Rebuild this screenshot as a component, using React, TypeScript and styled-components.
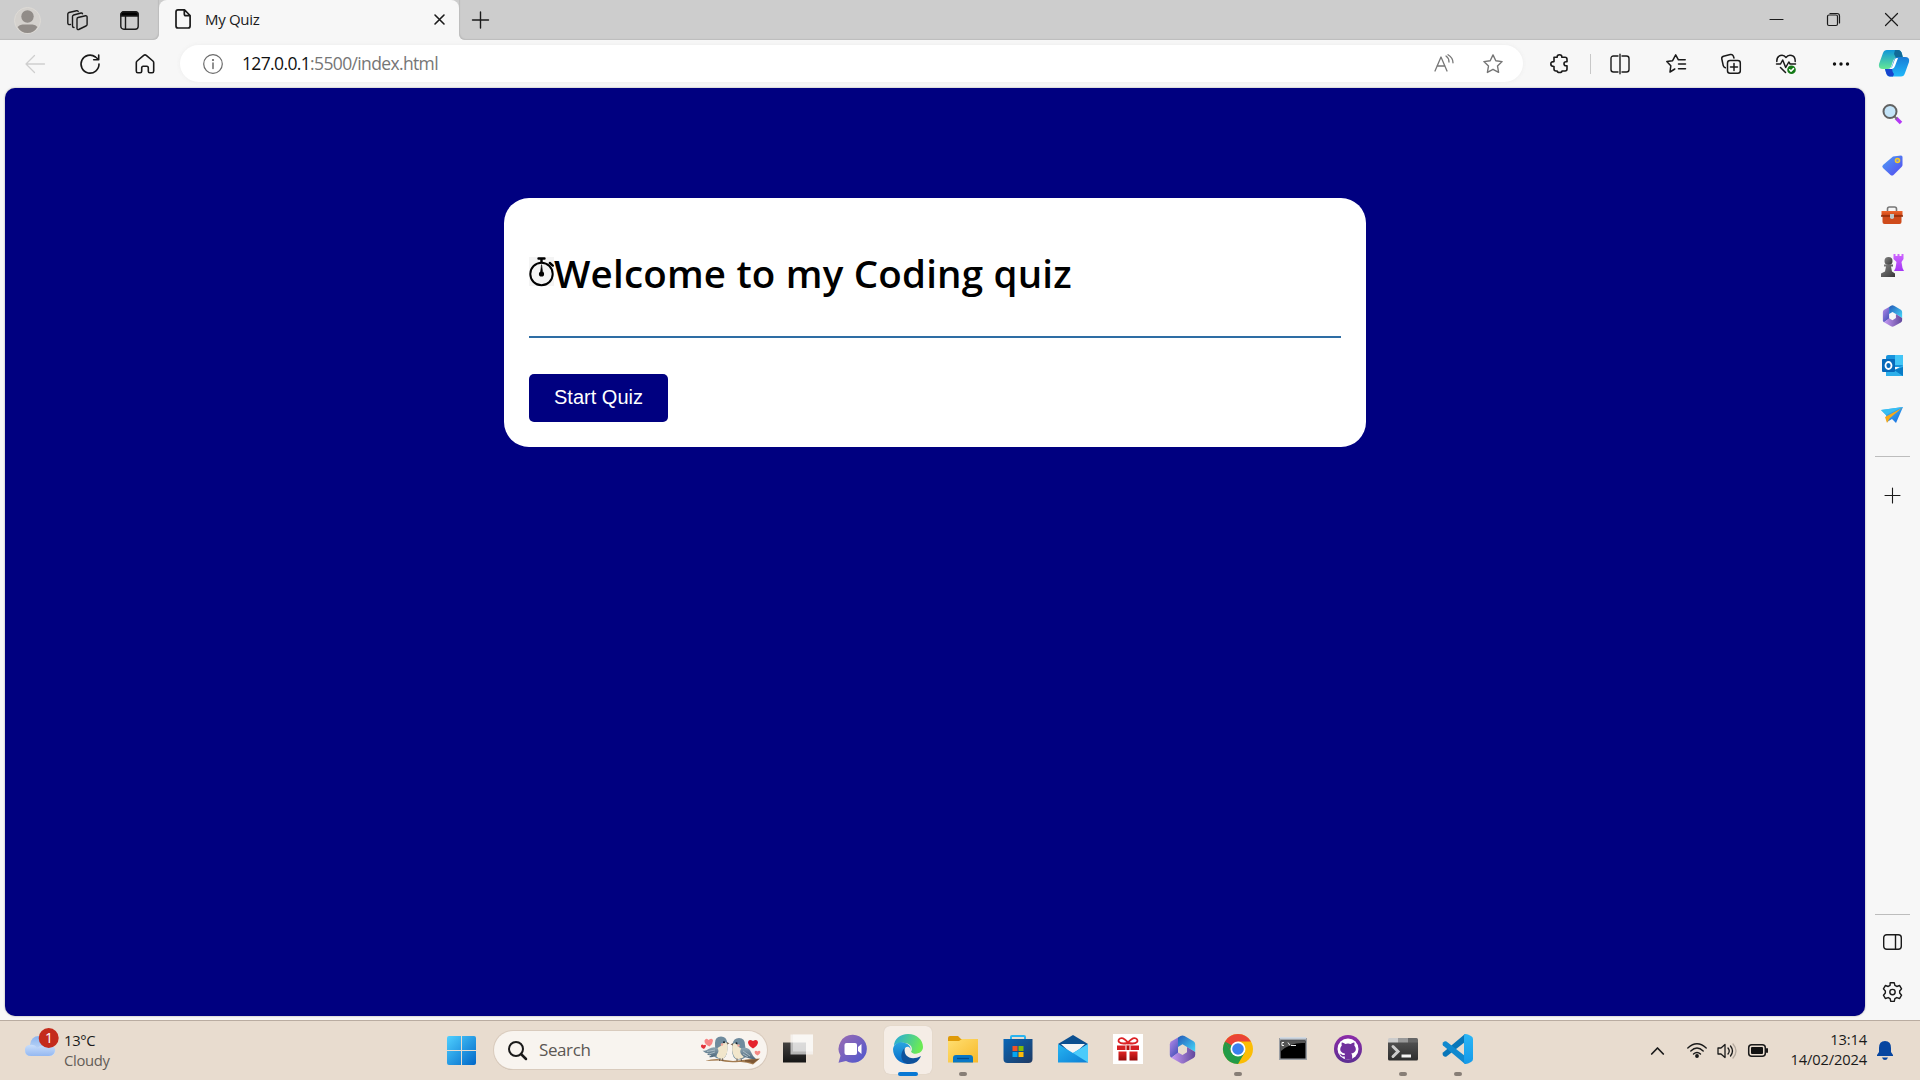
import React from "react";
import styled, { createGlobalStyle } from "styled-components";

const Global = createGlobalStyle`
  *{box-sizing:border-box}
  html,body{margin:0;padding:0;overflow:hidden}
  body{font-family:"Open Sans","Noto Sans",sans-serif;color:#1a1a1a;background:#f7f7f7}
  svg{display:block;flex:none;overflow:visible}
`;

const Screen = styled.div`width:1920px;height:1080px;display:flex;flex-direction:column;background:#f7f7f7;`;
const TabStrip = styled.header`height:40px;flex:none;display:flex;background:#f7f7f7;`;
const Slot = styled.div<{ $w: number }>`width:${p => p.$w}px;height:100%;flex:none;display:flex;align-items:center;justify-content:center;`;
const StripLead = styled.div`width:159px;display:flex;border-bottom-right-radius:6px;box-shadow:inset -1px -1px 1px #bdbdbd;background:#cdcdcd;`;
const TabHolder = styled.div`width:300px;background:#f7f7f7;border-radius:8px 8px 0 0;display:flex;align-items:center;padding:0 14px 0 16px;box-shadow:0 -8px 0 #cdcdcd;clip-path:inset(0);`;
const TabBack = styled.div`background:linear-gradient(#cdcdcd 12px,#f7f7f7 12px);`;
const TabTitle = styled.span`margin:-2px 0 0 14px;flex:1;font-size:15px;letter-spacing:-.3px;color:#1b1b1b;line-height:20px;`;
const StripRest = styled.div`flex:1;display:flex;background:#cdcdcd;border-bottom-left-radius:6px;box-shadow:inset 1px -1px 1px #bdbdbd;`;
const WindowButtons = styled.div`margin-left:auto;display:flex;height:39px;`;

const Toolbar = styled.nav`height:48px;flex:none;display:flex;align-items:center;background:#f7f7f7;padding:0 0 1px 7px;`;
const Address = styled.div`width:1343px;height:37px;margin-left:8px;border-radius:19px;background:#fff;display:flex;align-items:center;padding-left:23px;box-shadow:0 0 4px #ececec;`;
const Url = styled.span`margin:-1px 0 0 19px;flex:1;font-size:17.5px;letter-spacing:-.64px;color:#111;line-height:24px;span{color:#767676}`;
const Divider = styled.i`width:1px;height:20px;background:#c8c8c8;`;

const Middle = styled.div`flex:1;display:flex;min-height:0;padding:0 0 4px 5px;`;
const Viewport = styled.main`width:1860px;background:#000080;border-radius:10px;box-shadow:0 0 2px #999;padding-top:110px;`;
const Card = styled.section`width:862px;height:249px;margin:0 auto;padding:59px 25px 25px;border-radius:25px;background:#fff;`;
const TitleRow = styled.div`height:38px;display:flex;align-items:flex-start;`;
const Title = styled.h1`margin:-10px 0 0;font:600 38.5px/52px "Open Sans","Noto Sans",sans-serif;letter-spacing:.2px;color:#000;white-space:nowrap;`;
const Rule = styled.hr`height:2px;margin:41px 0 36px;border:0;background:#2e6da4;`;
const StartButton = styled.button`width:139px;height:48px;border:0;border-radius:5px;background:#000080;color:#fff;font:20px "Liberation Sans",Arial,sans-serif;padding:0 0 2px;`;

const Sidebar = styled.aside`width:54px;display:flex;flex-direction:column;align-items:center;`;
const SideCell = styled.div<{ $h: number }>`height:${p => p.$h}px;flex:none;display:flex;align-items:center;`;
const SideLine = styled.i<{ $top?: boolean }>`width:35px;height:1px;flex:none;background:#bdbdbd;margin-top:${p => (p.$top ? "auto" : "16px")};`;

const Taskbar = styled.footer`height:60px;flex:none;display:flex;border-top:1px solid #b9aca1;background:#e8dccf;`;
const Weather = styled.div`width:433px;display:flex;padding:13px 0 0 25px;`;
const WeatherText = styled.div`margin-left:8px;margin-top:-4px;font-size:14.8px;line-height:20px;letter-spacing:-.3px;span{display:block;color:#635d57}`;
const SearchBox = styled.div`width:273px;height:38px;margin:10px 3px 0 5px;border-radius:19px;background:#f8f4ef;box-shadow:0 0 0 1px #d9cbbd,0 1px 0 #b7aba0;display:flex;align-items:center;padding:0 5px 0 14px;`;
const SearchLabel = styled.span`margin:-2px 0 0 12px;flex:1;font-size:17px;letter-spacing:-.4px;color:#5b5753;`;
const AppCell = styled.div<{ $active?: boolean; $mark?: boolean }>`
  width:48px;height:48px;margin:5px 3.5px 0;flex:none;border-radius:6px;display:grid;grid-template-rows:46px 4px;place-items:center;
  background:${p => (p.$active ? "#f5ede6" : "transparent")};
  box-shadow:${p => (p.$active ? "0 0 1px #c9bdb1" : "none")};
  &::after{content:"";height:4px;border-radius:2px;width:${p => (p.$active ? 20 : 8)}px;background:${p => (p.$active ? "#0878d4" : p.$mark ? "#877e76" : "transparent")};}
`;
const Tray = styled.div`margin-left:auto;display:flex;padding-right:17px;`;
const Clock = styled.div`width:90px;padding-top:8px;text-align:right;font-size:14.7px;line-height:20px;letter-spacing:-.15px;white-space:nowrap;`;

type IconProps = { s?: number; h?: number; v?: string; c?: string; w?: number; children: React.ReactNode };
/* Outline icon, 20-unit grid by default */
const Line = ({ s = 20, h, v = "0 0 20 20", c = "#1a1a1a", w = 1.4, children }: IconProps) => (
  <svg width={s} height={h ?? s} viewBox={v} fill="none" stroke={c} strokeWidth={w} strokeLinecap="round" strokeLinejoin="round">{children}</svg>
);
/* Full-colour icon, 30-unit grid by default */
const Art = ({ s = 30, h, v = "0 0 30 30", children }: IconProps) => (
  <svg width={s} height={h ?? s} viewBox={v}>{children}</svg>
);

const Grad = ({ id, a, b, x2 = 1, y2 = 1 }: { id: string; a: string; b: string; x2?: number; y2?: number }) => (
  <linearGradient id={id} x1="0" y1="0" x2={x2} y2={y2}><stop stopColor={a} /><stop offset="1" stopColor={b} /></linearGradient>
);

const GradientSheet = styled.svg`position:absolute;width:0;height:0;`;

const Defs = () => (
  <GradientSheet>
    <defs>
      <Grad id="win" a="#4fd0ff" b="#0067c8" />
      <Grad id="m1" a="#b98bea" b="#4c56bd" x2={0.6} />
      <Grad id="m2" a="#2359b8" b="#46d9fb" />
      <Grad id="m3" a="#c59af4" b="#62489c" x2={1} y2={0} />
      <Grad id="cloud" a="#8ab3ee" b="#d7e8fc" x2={0} />
      <Grad id="cloudB" a="#c9defb" b="#94b8f1" x2={0} />
      <Grad id="chat" a="#9b6cb2" b="#4d57cf" />
      <Grad id="edgeT" a="#25a8e0" b="#6bea55" x2={1} y2={0.3} />
      <Grad id="edgeL" a="#2aa5e0" b="#0669c9" x2={0} />
      <Grad id="fold" a="#ffdf72" b="#f7b92a" />
      <Grad id="store" a="#0867b8" b="#1f3962" />
      <Grad id="mail" a="#27b5f2" b="#0c7ed4" />
      <Grad id="git" a="#8c2ba8" b="#5c2f92" x2={0} />
      <Grad id="vs" a="#2bb6f6" b="#159ae9" x2={0} />
      <Grad id="copA" a="#0f95d8" b="#65e795" x2={0} />
      <Grad id="copB" a="#197bd5" b="#20b8fa" x2={0} />
      <Grad id="tag" a="#4ea2f5" b="#5547ef" />
      <Grad id="box" a="#f0662d" b="#c74313" x2={0} />
      <Grad id="pawn" a="#858585" b="#373737" />
      <Grad id="rook" a="#cf66ff" b="#a437f4" x2={0} />
      <Grad id="plane" a="#42c8f7" b="#1767df" />
      <Grad id="red" a="#e02424" b="#980909" x2={0} />
      <Grad id="term" a="#505050" b="#2e2e2e" x2={0} />
      <Grad id="dark" a="#454341" b="#151515" x2={0} />
      <Grad id="wing" a="#8fa6b3" b="#4e687c" x2={0} />
    </defs>
  </GradientSheet>
);

const M365 = ({ s = 27, h = 29 }: { s?: number; h?: number }) => (
  <Art s={s} h={h} v="0 0 27 29">
    <path d="M9 2.500 2.500 6.300Q.8 7.300 .8 9.300V20Q.8 21.800 2.300 22.700L9 18V11.500Z" fill="url(#m1)" />
    <path d="M9 2.500 11.500 1Q13.500-.2 15.500 1L24.500 6.300Q26.200 7.300 26.200 9.300V17L18 12 13.500 9.300 9 12Z" fill="url(#m2)" />
    <path d="M26.200 17v3Q26.200 22 24.500 23L15.500 28Q13.500 29.200 11.500 28L2.300 22.700 9 17.500 13.500 20 18 17.300V12Z" fill="url(#m3)" />
  </Art>
);

const Copilot = () => (
  <Art s={30} h={27} v="0 0 30 27">
    <path d="M8 0h11q3 0 4 4l1 4h-7q-2 0-3 3l-2 6q-1 2-3 2H4q-5 0-4-5L4 3Q5 0 8 0Z" fill="url(#copA)" />
    <path d="M16 0h3q3 0 4 4l1 4h-7l-2-4Z" fill="#116a98" />
    <path d="M22 26.500H11q-3 0-4-4L6 19h4q2 0 3-3l2-6q1-3 4-3h7q5 0 4 5l-4 11q-1 3.500-4 3.500Z" fill="url(#copB)" />
    <path d="M6 19h4q2 0 3-2 0 5 2 7l-1 2.500h-3q-3 0-4-4Z" fill="#1744cd" />
    <path d="m16 9-3 8-3 2h3q2 0 3-3l3-8q-2-.5-3 1Z" fill="#fff" />
  </Art>
);

const Birds = () => (
  <Art s={62} h={30} v="0 0 62 30">
    <path d="M5 26q6-2 12-2 8 1 16 2 10-1 19-2l8-.5-7 6q-7-3-14-2.500-12 1-20-1.500-7 0-14 .5Z" fill="#a47c50" />
    <path d="m45 25 14-1-6 4.500q-3-2-8-2Z" fill="#7d5734" />
    <path d="M15 8q0-6.500 6-6.500 5.500 0 6.200 6 1.500 14-4.700 16.500-5 1-9-3 2-5 1.500-13Z" fill="#6f8b9d" />
    <path d="M17.500 13q4-2 6.500-6 3 0 3.500 3 1 9-4 13.500-4 1.500-7-2 2-4 1-8.500Z" fill="#f1e6cb" />
    <path d="M2.500 15.500q3 1 6-1.500 5-3 8.500-1 3 3 0 6-3 4-8 3l2.500-2q-3 .5-4.500-.5l2-1q-4 0-6.500-3Z" fill="url(#wing)" />
    <path d="m7 16.500 8-1.500m-6 4 6-2" stroke="#b6c5cd" strokeWidth=".8" />
    <circle cx="24" cy="7.200" r="1" fill="#171f2a" /><circle cx="22" cy="9.500" r="1.200" fill="#f2a79a" /><path d="m27 7 2.500 1.500L27 9.500Z" fill="#7a6a5a" />
    <path d="M45 10q0-7-6-7-5.500 0-6.500 6-2 11 3 15 6 2 12-3-2-5-2.500-11Z" fill="#6f8b9d" />
    <path d="M42 14q-4-2-6-6-3 0-3.700 3-1 8 3.500 12.500 4 1.500 8-1.500-2-4-1.800-8Z" fill="#f1e6cb" />
    <path d="M42 13q7-1 9 4 2 5 5 7-5 .5-8-1-6-1-7.500-5-1-3 1.500-5Z" fill="url(#wing)" />
    <path d="m43 16 7 5m-7-2 5 3" stroke="#b6c5cd" strokeWidth=".8" />
    <circle cx="36.500" cy="8.200" r="1" fill="#171f2a" /><circle cx="38.500" cy="10.500" r="1.200" fill="#f2a79a" /><path d="m33 8-2.500 1.500L33 10.500Z" fill="#7a6a5a" />
    <path d="M53 13.500q-5-3-5-6.500 1-3.500 5-1 4-2.500 5 1 0 3.500-5 6.500Z" fill="#e5232d" />
    <path d="M9.500 11.500Q4 9 4.500 5.500q1.500-3 4-.5 4-2.500 4.500.5 0 3-3.500 6Z" fill="#f68585" />
    <path d="M4 14Q.5 12.500 1 10.500q1-1.700 2.700-.3Q6 9 6 11q-.5 1.500-2 3Z" fill="#e2323a" />
    <path d="M57.500 20.500q-3-1.500-3-3.500 1-2 3-.5 2-1.500 3 .5-.5 2-3 3.500Z" fill="#f48984" />
    <path d="m20 23.500-.5 2.500m3-2.500.5 2.500m14-2.500v2.500m4-2.500.5 2.500" stroke="#5a493d" strokeWidth=".9" />
  </Art>
);

const TaskApps = () => (
  <>
    <AppCell><Art>
      <path d="M0 8.500h23v20H0Z" fill="url(#dark)" />
      <path d="M7.500.5H30v20H7.500Z" fill="#f9f9f9" opacity=".68" /><path d="M10 .5h20v17H10Z" fill="#fff" opacity=".45" />
    </Art></AppCell>
    <AppCell><Art>
      <path d="M15 .8A14 14 0 1 1 8 27l-7.500 1.800 2-7A14 14 0 0 1 15 .8Z" fill="url(#chat)" />
      <rect x="6.500" y="9" width="12.500" height="12" rx="2" fill="#fff" /><path d="m20 13 3.500-3v10L20 17Z" fill="#fff" />
    </Art></AppCell>
    <AppCell $active><Art>
      <path d="M1 12C1 5 7 0 15 0c9 0 15 6 15 13 0 6-8 9-12 5 2-3 1-8-6-9-5-.7-9 .5-11 3Z" fill="url(#edgeT)" />
      <path d="M0 15C1 9 7 7 12 9c4 1 7 5 5 8-6-2-8 6-1 9l3 3C9 32 0 25 0 15Z" fill="url(#edgeL)" />
      <path d="M12 14c3-3 7 0 5.500 4 2 2 5 3 9 1l2 2c-4 4-11 4-14 1-3-2-4-5-2.500-8Z" fill="#f5ede6" />
      <path d="M11.500 14c-1 9 7 13 16.500 8-2 5-6 8-12 8-8 0-10-10-4.500-16Z" fill="#0f529c" />
    </Art></AppCell>
    <AppCell $mark><Art>
      <path d="M0 4q0-2 2-2h8l3 3h17v9H0Z" fill="#df9a08" /><path d="M0 7h11l3-2h16v23.500H0Z" fill="url(#fold)" />
      <path d="M5 28.500V24q0-3 3-3h14q3 0 3 3v4.500Z" fill="#0877c6" /><path d="M9 24.500h12" stroke="#044c8e" strokeWidth="1.300" />
    </Art></AppCell>
    <AppCell><Art>
      <path d="M8 6V3q0-1 1-1h12q1 0 1 1v3" fill="none" stroke="#2bb4ef" strokeWidth="2" />
      <path d="M.5 5h29v20q0 4-4 4h-21q-4 0-4-4Z" fill="url(#store)" />
      <path d="M9.500 12h5v5h-5Z" fill="#f35325" /><path d="M15.500 12h5v5h-5Z" fill="#81bc06" /><path d="M9.500 18h5v5h-5Z" fill="#05a6f0" /><path d="M15.500 18h5v5h-5Z" fill="#ffba08" />
    </Art></AppCell>
    <AppCell><Art>
      <path d="M0 10 15 1l15 9-15 12Z" fill="#0b4f90" /><path d="M3 10h24l-12 11Z" fill="#f5f5f5" />
      <path d="m0 10 15 9 15-9v18.500H0Z" fill="url(#mail)" /><path d="m30 10-15 9 15 9.500Z" fill="#4bcbfb" />
    </Art></AppCell>
    <AppCell><Art>
      <path d="M0 0h30v30H0Z" fill="#fff" /><path d="M4 11.500h22V16H4Z" fill="#d51f22" /><path d="M5.500 17.500h8v9h-8Zm11 0h8v9h-8Z" fill="url(#red)" /><path d="M12.500 11.500h5V16h-5Z" fill="#fff" /><path d="M13.500 11.500h3V16h-3Z" fill="#b90d0d" />
      <path d="M15 9C5 11 4 6 7 4.500S14 7 15 9c1-2 5-6 8-4.500S25 11 15 9Z" fill="none" stroke="#dc2225" strokeWidth="1.800" />
    </Art></AppCell>
    <AppCell><M365 /></AppCell>
    <AppCell $mark><Art>
      <circle cx="15" cy="15" r="15" fill="#fbbd05" />
      <path d="M15 15 2 7.500A15 15 0 0 0 15 30l7-12Z" fill="#229b48" /><path d="M2 7.500A15 15 0 0 1 28 7.500H15L8.500 19Z" fill="#ea4335" /><path d="m2 7.500 6.500 11.300L15 15Z" fill="#229b48" />
      <circle cx="15" cy="15" r="7.500" fill="#fff" /><circle cx="15" cy="15" r="5.800" fill="#3980ee" />
    </Art></AppCell>
    <AppCell><Art s={28} h={24} v="0 0 28 24">
      <path d="M0 1h28v22H0Z" fill="#9b9ea3" /><path d="M1.500 3.500h25v18h-25Z" fill="#000" /><path d="M2 4h24v2Q12 5 2 14Z" fill="#555" />
      <path d="M5 5.500H3v3h2m2-2v0m0 2v0m2-3 2 3m1 0h5" fill="none" stroke="#eee" />
      <path d="M1 1h26" stroke="#ccd9e6" strokeWidth="1.500" />
    </Art></AppCell>
    <AppCell><Art s={28} v="0 0 28 28">
      <circle cx="14" cy="14" r="14" fill="url(#git)" /><circle cx="14" cy="14" r="10.500" fill="#fff" />
      <path d="M10.800 24.400v-3c-4.500 1-3-2-5.500-2.500 2-1 3 2 5.500 1v-1.500c-6-1-5-6-3-8-.5-2 0-3 0-3s2 0 3.500 1.500q2.700-.7 5.400 0C18.300 7.400 20.300 7.400 20.300 7.400s.5 1 0 3c2 2 3 7-3 8 1 1 1 3 .8 6Z" fill="#71309d" />
    </Art></AppCell>
    <AppCell $mark><Art>
      <path d="M0 8h30v17q0 1.500-1.500 1.500h-27Q0 26.500 0 25Z" fill="url(#term)" /><path d="M0 8.500V5.500Q0 4 1.500 4H10v4.500Z" fill="#ccc" /><path d="M10 4h10v4.500H10Z" fill="#999" /><path d="M20 4h8.500Q30 4 30 5.500v3H20Z" fill="#666" />
      <path d="m5 12.500 5 5-5 5" fill="none" stroke="#ccc" strokeWidth="3" strokeLinecap="round" /><path d="M13.500 22h9.500" stroke="#f5f5f5" strokeWidth="3" />
    </Art></AppCell>
    <AppCell $mark><Art>
      <path d="M22 8 3.500 22.500Q2 23.500 0 21.500q-1-2 0-3L22 0Z" fill="#0876b9" /><path d="M22 22 3.500 7.500Q2 6.500 0 8.500q-1 2 0 3L22 30Z" fill="#1089cf" /><path d="M22 0q2-.5 6 2 2 1 2 3v20q0 2-2 3-4 2.500-6 2-1-.5-1-3V3q0-2.500 1-3Z" fill="url(#vs)" />
    </Art></AppCell>
  </>
);

export default function App() {
  return (
    <Screen>
      <Global /><Defs />
      <TabStrip>
        <StripLead>
          <Slot $w={55}><Art s={27} v="0 0 27 27"><circle cx="13.500" cy="13.500" r="13" fill="#d4d1cd" stroke="#dedbd6" /><circle cx="13.500" cy="9.500" r="6.200" fill="#918c88" /><path d="M3.500 20q2-2.500 5-2.500h10q3 0 5 2.500-3.500 6-10 6t-10-6Z" fill="#918c88" /></Art></Slot>
          <Slot $w={45}><Line s={21} v="0 0 21 21"><path d="M11 7.500 18.500 5.800q1.500-.2 1.600 1.200v7.500q0 1-1.200 1.500l-7.200 3.500q-1.500.5-1.700-1V9q0-1.200 1-1.500Z" /><path d="M7 17.500q-1.500 0-1.500-1.500V6.500q0-1 1.200-1.500L14 3q1.200-.2 1.500.7M3.500 14.500Q.8 15 .8 13V4q0-1 1.200-1.500L9.500.7q1.300-.2 1.700.8" /></Line></Slot>
          <Slot $w={59}><Line s={19} v="0 0 19 19"><rect x=".8" y=".8" width="17.400" height="17.400" rx="3" /><path d="M1 3.500q0-2.500 2.500-2.500h12q2.500 0 2.500 2.500V5H1Z" fill="#000" /><path d="M5.500 5v13" /></Line></Slot>
        </StripLead>
        <TabBack>
          <TabHolder>
            <Slot $w={16}><Line s={16} h={39} v="0 0 16 39" w={1.7}><path d="M3 9.900h6.500l5.600 5.600V26q0 2-2 2H3q-2 0-2-2V12q0-2.100 2-2.100Zm6.300.3V14q0 1.700 1.700 1.700h4" /></Line></Slot>
            <TabTitle>My Quiz</TabTitle>
            <Line s={11} v="0 0 11 11" w={1.600}><path d="m1 1 9 9m0-9-9 9" /></Line>
          </TabHolder>
        </TabBack>
        <StripRest>
          <Slot $w={43}><Line s={17} v="0 0 17 17" w={1.400}><path d="M8.500.0v16m-8-8h16" /></Line></Slot>
          <WindowButtons>
            <Slot $w={57}><Line s={13} v="0 0 13 13" w={1.100}><path d="M0 6.500h13" /></Line></Slot>
            <Slot $w={57}><Line s={13} v="0 0 13 13" w={1.200}><rect x=".5" y="2" width="10" height="10.500" rx="1.500" /><path d="M3 .5h7q2.500 0 2.500 2.500v7" /></Line></Slot>
            <Slot $w={58}><Line s={13} v="0 0 13 13" w={1.200}><path d="m.5.5 12 12m0-12-12 12" /></Line></Slot>
          </WindowButtons>
        </StripRest>
      </TabStrip>

      <Toolbar>
        <Slot $w={55}><Line c="#cfcfcf" w={1.300}><path d="M19.500 10H1m8.500-8.500L1 10l8.500 8.500" /></Line></Slot>
        <Slot $w={55}><Line w={1.600}><path d="M19 10A9 9 0 1 1 15.500 3l3 2.500M18.700 1v4.800h-5" /></Line></Slot>
        <Slot $w={55}><Line w={1.600}><path d="M1.300 8.700q0-1 .8-1.700L8.700 1.400q1.300-1 2.600 0L17.900 7q.8.700.8 1.700V17q0 1.800-1.500 1.800h-2.400q-1.500 0-1.500-1.500V14q0-1.800-1.500-1.800H8.200Q6.700 12.200 6.700 14v3.300q0 1.500-1.500 1.500H2.800q-1.500 0-1.500-1.800Z" /></Line></Slot>
        <Address>
          <Line c="#6b6b6b" w={1.200}><circle cx="10" cy="10" r="9.300" /><path d="M10 9v5.500" strokeWidth="1.500" /><circle cx="10" cy="6" r=".5" fill="#666" /></Line>
          <Url>127.0.0.1<span>:5500/index.html</span></Url>
          <Slot $w={49}><Line c="#767676" w={1.300}><path d="M1 17 7 3l6 14M3 12h8M12 2q3 2 3 6M14 .8q5 3 5 8" /></Line></Slot>
          <Slot $w={49}><Line c="#767676" w={1.400}><path d="m10 .9 2.800 5.800 6.300.9-4.600 4.400 1.100 6.400L10 15.300l-5.600 3.100L5.500 12 .9 7.600l6.300-.9Z" /></Line></Slot>
          <Slot $w={6} />
        </Address>
        <Slot $w={6} />
        <Slot $w={61}><Line s={19} v="0 0 19 19" w={1.600}><path d="M4 3.200h3.200Q7 .8 9.500.8t2.300 2.400H15q2 0 2 2v2.500h-1q-2 0-2 2t2 2h1V15q0 2-2 2h-3q0 1.500-2.400 1.500T7.200 17H6q-2 0-2-2v-2.500Q.8 12.500.8 10T4 7.600Z" /></Line></Slot>
        <Divider />
        <Slot $w={57}><Line><path d="M8 2H3.500Q1 2 1 4.500v11Q1 18 3.500 18H8m4-16h4.500Q19 2 19 4.500v11q0 2.500-2.500 2.500H12M10 .3v19.400" /></Line></Slot>
        <Slot $w={55}><Line w={1.500}><path d="M8.800 15 4 18l.8-6.200L.8 7.500l5.800-.8L9.700.8l2.700 5h6.800M12.500 10h7m-7 4.800h7" /></Line></Slot>
        <Slot $w={55}><Line w={1.500}><rect x="6.500" y="6.500" width="12.800" height="12.800" rx="2.500" /><path d="M13 9.500v7M9.500 13h7M4.300 13.800q-1.500-.5-2-2L.8 5q-.4-2 1.700-2.700l6.800-1.800q2.200-.5 3 1.500l.7 2" /></Line></Slot>
        <Slot $w={55}><Line w={1.500}><path d="M.8 7.500C.5.500 7.500 0 10 3.500 12.500 0 19.500.5 19.200 7.500M.5 10h4l2.200-4 3 7.500L12.800 8l1.300 2h5.400M4.500 13.500l5 5" /><circle cx="15.500" cy="15.800" r="4.300" fill="#147a17" stroke="none" /><path d="m13.700 15.800 1.300 1.300 2.500-2.500" stroke="#fff" /></Line></Slot>
        <Slot $w={55}><Line w={0}><g fill="#111"><circle cx="3.500" cy="10" r="1.700" /><circle cx="10" cy="10" r="1.700" /><circle cx="16.500" cy="10" r="1.700" /></g></Line></Slot>
        <Slot $w={51}><Copilot /></Slot>
      </Toolbar>

      <Middle>
        <Viewport>
          <Card>
            <TitleRow>
              <Line s={25} h={29} v="0 0 25 29" w={2} c="#000"><path d="M0 0h25v29H0Z" fill="#f4f4f4" stroke="none" /><circle cx="12.500" cy="17" r="11.200" /><path d="M9.500 1.500h6M12.500 2v3" strokeWidth="2.400" /><path d="m20.800 6 3 2.600" strokeWidth="2.400" /><path d="m12.500 8-1.300 9.500h2.600Z" fill="#000" strokeWidth=".6" /><circle cx="12.500" cy="17" r="1.600" fill="#000" /></Line>
              <Title>Welcome to my Coding quiz</Title>
            </TitleRow>
            <Rule />
            <StartButton>Start Quiz</StartButton>
          </Card>
        </Viewport>
        <Sidebar>
          <SideCell $h={53}><Art s={21} v="0 0 21 21"><path d="m14 14 5 5" stroke="#b338f5" strokeWidth="3.600" /><path d="m12 12 3 3" stroke="#777" strokeWidth="2" /><circle cx="8" cy="7.500" r="6.500" fill="#c4e4f8" stroke="#626262" strokeWidth="2" /></Art></SideCell>
          <SideCell $h={49}><Art s={21} v="0 0 21 21"><path d="M11 1.500 19 .5q1.500 0 1.500 1.500v8q0 1-1 2l-8 8q-1.500 1-3 0L1 13q-1.500-1.500 0-3Z" fill="url(#tag)" /><circle cx="15.500" cy="5.500" r="2" fill="#7693e5" stroke="#f8ca24" strokeWidth="1.600" /></Art></SideCell>
          <SideCell $h={50}><Art s={22} h={18} v="0 0 22 18"><path d="M6.500 5V3q0-2 2-2h5q2 0 2 2v2" fill="none" stroke="#777" strokeWidth="1.600" /><path d="M.5 5h21v5H.5Z" fill="url(#box)" /><path d="M1.500 10h19v6q0 2-2 2h-15q-2 0-2-2Z" fill="#cf4b1b" /><path d="M0 10h22" stroke="#8f2b0a" strokeWidth="1.500" /><path d="M9 8h4v4q-2 2-4 0Z" fill="#bbc7c8" /></Art></SideCell>
          <SideCell $h={50}><Art s={23} v="0 0 23 23"><path d="M12.500 0h2v2h2V0h2v2h2V0h2v5l-2 3 1 6 1.500 3h-10l1.500-3 1-6-3-3Z" fill="url(#rook)" /><circle cx="7.500" cy="7" r="4" fill="url(#pawn)" /><path d="M3 10.500h9v2h-2l1 5 3 2V23H0v-3.500l4-2 1-5H3Z" fill="url(#pawn)" /></Art></SideCell>
          <SideCell $h={51}><M365 s={21} h={22} /></SideCell>
          <SideCell $h={49}><Art s={21} v="0 0 21 21"><path d="M6 0h14q1 0 1 1v11H4V2q0-2 2-2Z" fill="#1793dc" /><path d="M13 0h7q1 0 1 1v9h-8Z" fill="#42c6f7" /><path d="m4 10 9 5 8-5v11H4Z" fill="#2dafea" /><path d="m12 15 9 6v-9Z" fill="#087bc6" /><rect y="4" width="13" height="13" rx="1" fill="#0769ba" /><ellipse cx="6.500" cy="10.500" rx="3" ry="3.500" fill="none" stroke="#fff" strokeWidth="1.800" /></Art></SideCell>
          <SideCell $h={50}><Art s={22} h={17} v="0 0 22 17"><path d="M0 3 22 0 15 16l-4-4-5 3-1-7Z" fill="url(#plane)" /><path d="M22 0 5 8l-5-5Z" fill="#38bff3" /><path d="M21 1 4 10l2 6 3-5Z" fill="#f6a91b" /></Art></SideCell>
          <SideLine /><SideCell $h={77}><Line s={15} v="0 0 15 15" w={1.100}><path d="M7.500 0v15M0 7.500h15" /></Line></SideCell>
          <SideLine $top />
          <SideCell $h={54}><Line s={19} h={16} v="0 0 19 16" w={1.400}><rect x=".7" y=".7" width="17.600" height="14.600" rx="3" /><path d="M12.500 1v14" /></Line></SideCell>
          <SideCell $h={47}><Line s={21} v="0 0 21 22" w={1.500}><path d="m8 1 .7-.3h3.600L13 3.500l2 1.200 3-1 2 3.500-2 2.300v2l2 2.300-2 3.500-3-1-2 1.200-.7 2.800H8.700L8 17.500l-2-1.200-3 1-2-3.500 2-2.300v-2L1 7.200l2-3.500 3 1 2-1.200Z" /><circle cx="10.500" cy="10.500" r="2.800" /></Line></SideCell>
        </Sidebar>
      </Middle>

      <Taskbar>
        <Weather>
          <Art s={31} h={23} v="0 0 31 23"><path d="M5 11Q6 2 14 2t11 8q6 3 5 8-1 4-6 4H6q-6 0-6-6 0-4 5-5Z" fill="url(#cloud)" /><path d="M4 11q6-1 8 3 5-4 10-1 5-4 8 2 0 7-6 7H6q-6 0-6-6 0-4 4-5Z" fill="url(#cloudB)" /><circle cx="23.700" cy="4" r="10" fill="#c42b1c" /><text x="20" y="9.300" fill="#fff" fontFamily="Open Sans, sans-serif" fontSize="14">1</text></Art>
          <WeatherText>13°C<span>Cloudy</span></WeatherText>
        </Weather>
        <Slot $w={56}><Art s={29} v="0 0 29 29"><path d="M2 0h12v14H0V2Q0 0 2 0Zm13 0h12q2 0 2 2v12H15ZM0 15h14v14H2q-2 0-2-2Zm15 0h14v12q0 2-2 2H15Z" fill="url(#win)" /></Art></Slot>
        <SearchBox>
          <Line s={19} v="0 0 19 19" w={2}><circle cx="8" cy="8" r="7" /><path d="m13 13 5 5" strokeWidth="2.500" /></Line>
          <SearchLabel>Search</SearchLabel><Birds />
        </SearchBox>
        <TaskApps />
        <Tray>
          <Slot $w={42}><Line s={13} h={8} v="0 0 13 8" w={1.700}><path d="m.7 7 5.800-6 5.800 6" /></Line></Slot>
          <Slot $w={38}><Line h={15} v="0 0 20 15" w={1.400}><path d="M.8 5Q10-3.500 19.200 5M3.800 8Q10 2 16.200 8M6.500 11q3.500-3 7 0" /><circle cx="10" cy="13" r="1.200" fill="#111" /></Line></Slot>
          <Slot $w={22}><Line h={16} v="0 0 20 16" w={1.300}><path d="M1 5h3l4-3.500v13L4 11H1Zm10 0q2.500 3 0 6" /><path d="M13.500 3q4 5 0 10" /><path d="M16 1q6 7 0 14" stroke="#b5aaa0" /></Line></Slot>
          <Slot $w={39}><Line h={13} v="0 0 20 13" w={1.500}><rect x=".7" y=".8" width="16.600" height="11.500" rx="3" /><rect x="3" y="3" width="12" height="7" rx="1" fill="#111" stroke="none" /><path d="M19 5v3" strokeWidth="2" /></Line></Slot>
          <Clock>13:14<br />14/02/2024</Clock>
          <Slot $w={36}><Art s={16} h={19} v="0 0 16 19"><path d="M8 0q6 0 6 7v4l2 3v1H0v-1l2-3V7q0-7 6-7Z" fill="#0645a0" /><path d="M5 16.500h6q-1 2.500-3 2.500t-3-2.500Z" fill="#0645a0" /></Art></Slot>
        </Tray>
      </Taskbar>
    </Screen>
  );
}
